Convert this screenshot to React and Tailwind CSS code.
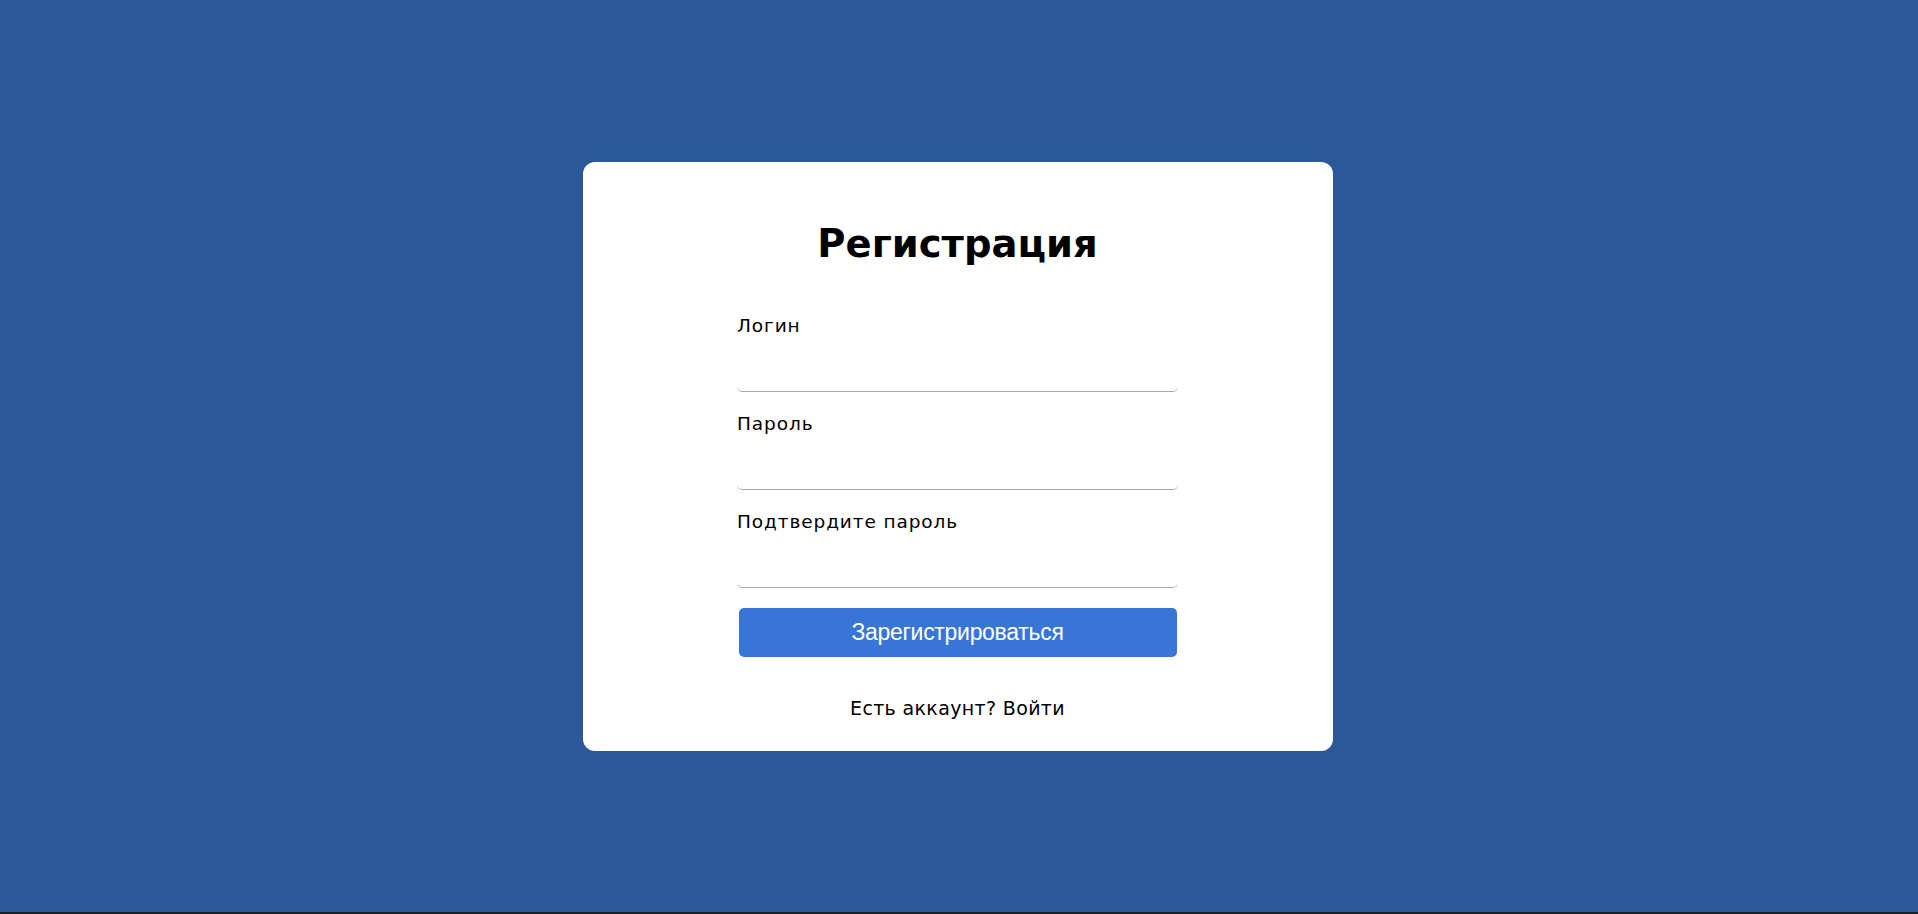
export default function App() {
  return (
    <div className="min-h-[914px] bg-[#1e1e1e]">
      <div
        className="h-[912px] bg-[#2b5899] flex items-center justify-center pr-[3px]"
        style={{ fontFamily: '"DejaVu Sans", "Noto Sans", sans-serif' }}
      >
        <div className="w-[750px] h-[589px] bg-white rounded-[12px] flex flex-col items-center pt-[60px]">
          <h1 className="text-[38.5px] leading-[44px] font-bold text-black">Регистрация</h1>

          <form className="w-[441px] mt-[49px] flex flex-col">
            {/* Login */}
            <label className="text-[18.5px] leading-[22px] tracking-[0.9px] text-black">Логин</label>
            <input
              type="text"
              className="mt-[10px] h-[45px] w-full rounded-[5px] border-b border-[#a9a9a9] outline-none"
            />

            {/* Password */}
            <label className="mt-[21px] text-[18.5px] leading-[22px] tracking-[0.9px] text-black">Пароль</label>
            <input
              type="password"
              className="mt-[10px] h-[45px] w-full rounded-[5px] border-b border-[#a9a9a9] outline-none"
            />

            {/* Confirm */}
            <label className="mt-[21px] text-[18.5px] leading-[22px] tracking-[0.9px] text-black">
              Подтвердите пароль
            </label>
            <input
              type="password"
              className="mt-[10px] h-[45px] w-full rounded-[5px] border-b border-[#a9a9a9] outline-none"
            />

            <button
              type="button"
              className="mt-[20px] mx-auto w-[438px] h-[49px] rounded-[5px] bg-[#3776d6] text-white text-[23px] tracking-[-0.3px] font-['Liberation_Sans',Arial,sans-serif]"
            >
              Зарегистрироваться
            </button>

            <p className="mt-[39px] text-center text-[19px] leading-[24px] tracking-[0.35px] text-black">
              Есть аккаунт? Войти
            </p>
          </form>
        </div>
      </div>
    </div>
  );
}
